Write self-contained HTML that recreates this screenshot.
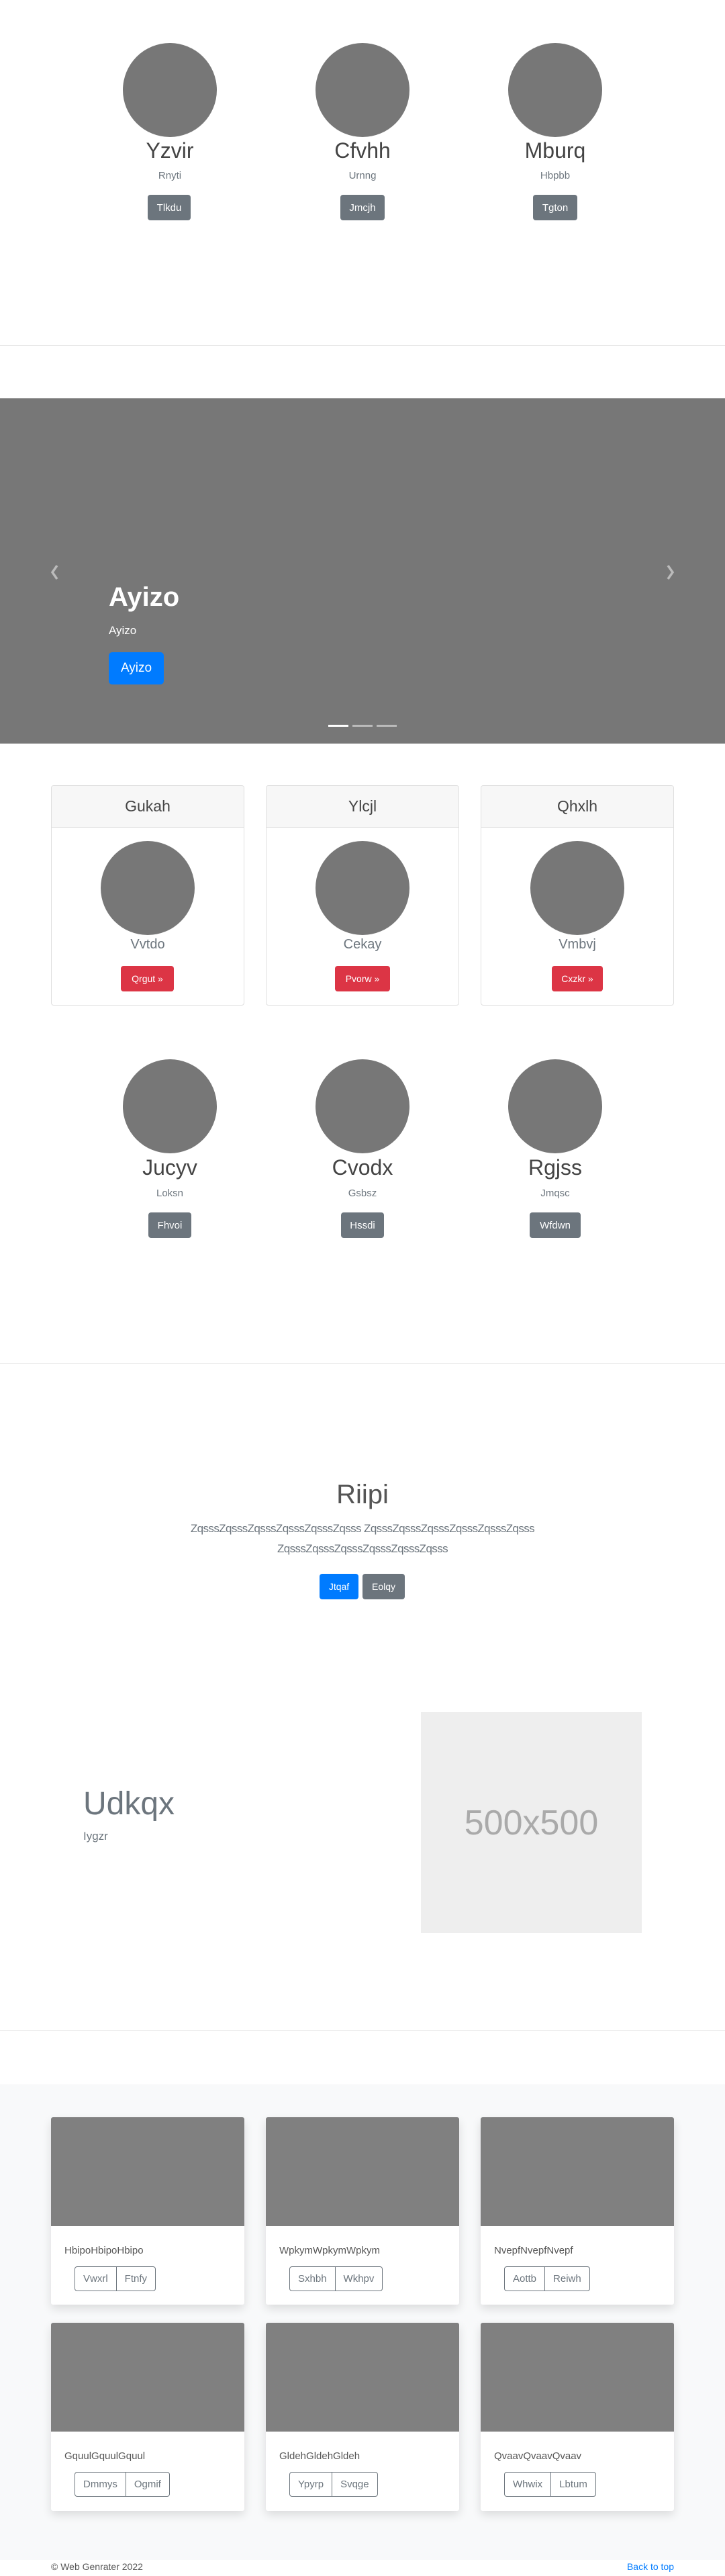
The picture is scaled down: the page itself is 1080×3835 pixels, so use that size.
<!DOCTYPE html>
<html><head><meta charset="utf-8">
<style>
*{box-sizing:border-box;margin:0;padding:0}
body{width:1080px;height:3835px;position:relative;font-family:"Liberation Sans",sans-serif;background:#fff;color:#212529;overflow:hidden}
.a{position:absolute}
.c{position:absolute;width:140px;height:140px;border-radius:50%;background:#777}
.t{position:absolute;text-align:center;white-space:nowrap}
.btn{position:absolute;display:flex;align-items:center;justify-content:center;border-radius:4px;color:#fff;font-size:15px}
.gray{background:#6c757d}
.red{background:#dc3545}
.blue{background:#007bff}
.hr{position:absolute;left:0;width:1080px;height:1px;background:#e5e5e5}
.card{position:absolute;border:1px solid rgba(0,0,0,.125);border-radius:4px;background:#fff;overflow:hidden}
.ch{height:62px;background:#f7f7f7;border-bottom:1px solid rgba(0,0,0,.125);display:flex;align-items:center;justify-content:center;font-size:23px;color:#444}
.sc{position:absolute;background:#fff;box-shadow:0 6px 14px rgba(0,0,0,.12);border-radius:3px;overflow:hidden}
.sc .im{height:162px;background:#808080}
.sc .tt{position:absolute;left:20px;top:190px;font-size:15px;color:#555}
.bg{position:absolute;left:35px;top:222px;height:37px;display:flex;border:1px solid #6c757d;border-radius:4px}
.bg span{display:flex;align-items:center;padding:0 12px;font-size:15px;color:#6c757d}
.bg span+span{border-left:1px solid #6c757d}
</style></head><body>

<div class="c" style="left:183px;top:64px"></div>
<div class="c" style="left:470px;top:64px"></div>
<div class="c" style="left:757px;top:64px"></div>
<div class="t" style="left:153px;width:200px;top:206px;font-size:32px;color:#444">Yzvir</div>
<div class="t" style="left:440px;width:200px;top:206px;font-size:32px;color:#444">Cfvhh</div>
<div class="t" style="left:727px;width:200px;top:206px;font-size:32px;color:#444">Mburq</div>
<div class="t" style="left:153px;width:200px;top:253px;font-size:15px;color:#6c757d">Rnyti</div>
<div class="t" style="left:440px;width:200px;top:253px;font-size:15px;color:#6c757d">Urnng</div>
<div class="t" style="left:727px;width:200px;top:253px;font-size:15px;color:#6c757d">Hbpbb</div>
<div class="btn gray" style="left:220px;top:290px;width:64px;height:38px">Tlkdu</div>
<div class="btn gray" style="left:507px;top:290px;width:66px;height:38px">Jmcjh</div>
<div class="btn gray" style="left:794px;top:290px;width:66px;height:38px">Tgton</div>
<div class="hr" style="top:514px"></div>

<div class="a" style="left:0;top:593px;width:1080px;height:514px;background:#777">
  <svg class="a" style="left:73px;top:247px" width="16" height="24" viewBox="0 0 16 24"><path d="M12 2 L5 12 L12 22" stroke="#bbb" stroke-width="3.5" fill="none"/></svg>
  <svg class="a" style="left:991px;top:247px" width="16" height="24" viewBox="0 0 16 24"><path d="M4 2 L11 12 L4 22" stroke="#bbb" stroke-width="3.5" fill="none"/></svg>
  <div class="a" style="left:162px;top:274px;font-size:40px;font-weight:bold;color:#fff">Ayizo</div>
  <div class="a" style="left:162px;top:336px;font-size:17px;color:#fff">Ayizo</div>
  <div class="btn blue" style="left:162px;top:378px;width:82px;height:48px;font-size:19px;border-radius:5px">Ayizo</div>
  <div class="a" style="left:489px;top:486px;width:30px;height:3px;background:#fff"></div>
  <div class="a" style="left:525px;top:486px;width:30px;height:3px;background:rgba(255,255,255,.5)"></div>
  <div class="a" style="left:561px;top:486px;width:30px;height:3px;background:rgba(255,255,255,.5)"></div>
</div>

<div class="card" style="left:76px;top:1169px;width:288px;height:328px"><div class="ch">Gukah</div></div>
<div class="card" style="left:396px;top:1169px;width:288px;height:328px"><div class="ch">Ylcjl</div></div>
<div class="card" style="left:716px;top:1169px;width:288px;height:328px"><div class="ch">Qhxlh</div></div>
<div class="c" style="left:150px;top:1252px"></div>
<div class="c" style="left:470px;top:1252px"></div>
<div class="c" style="left:790px;top:1252px"></div>
<div class="t" style="left:120px;width:200px;top:1395px;font-size:20px;color:#6c757d">Vvtdo</div>
<div class="t" style="left:440px;width:200px;top:1395px;font-size:20px;color:#6c757d">Cekay</div>
<div class="t" style="left:760px;width:200px;top:1395px;font-size:20px;color:#6c757d">Vmbvj</div>
<div class="btn red" style="left:180px;top:1438px;width:79px;height:38px;font-size:14px">Qrgut »</div>
<div class="btn red" style="left:499px;top:1438px;width:82px;height:38px;font-size:14px">Pvorw »</div>
<div class="btn red" style="left:822px;top:1438px;width:76px;height:38px;font-size:14px">Cxzkr »</div>

<div class="c" style="left:183px;top:1577px"></div>
<div class="c" style="left:470px;top:1577px"></div>
<div class="c" style="left:757px;top:1577px"></div>
<div class="t" style="left:153px;width:200px;top:1720px;font-size:32px;color:#444">Jucyv</div>
<div class="t" style="left:440px;width:200px;top:1720px;font-size:32px;color:#444">Cvodx</div>
<div class="t" style="left:727px;width:200px;top:1720px;font-size:32px;color:#444">Rgjss</div>
<div class="t" style="left:153px;width:200px;top:1768px;font-size:15px;color:#6c757d">Loksn</div>
<div class="t" style="left:440px;width:200px;top:1768px;font-size:15px;color:#6c757d">Gsbsz</div>
<div class="t" style="left:727px;width:200px;top:1768px;font-size:15px;color:#6c757d">Jmqsc</div>
<div class="btn gray" style="left:221px;top:1805px;width:64px;height:38px">Fhvoi</div>
<div class="btn gray" style="left:508px;top:1805px;width:64px;height:38px">Hssdi</div>
<div class="btn gray" style="left:789px;top:1805px;width:76px;height:38px">Wfdwn</div>
<div class="hr" style="top:2029px"></div>

<div class="t" style="left:0;width:1080px;top:2203px;font-size:40px;font-weight:300;color:#555">Riipi</div>
<div class="t" style="left:0;width:1080px;top:2261px;font-size:17px;line-height:30px;color:#6c757d;letter-spacing:-0.6px">ZqsssZqsssZqsssZqsssZqsssZqsss ZqsssZqsssZqsssZqsssZqsssZqsss<br>ZqsssZqsssZqsssZqsssZqsssZqsss</div>
<div class="btn blue" style="left:476px;top:2343px;width:58px;height:38px;font-size:14px">Jtqaf</div>
<div class="btn gray" style="left:540px;top:2343px;width:63px;height:38px;font-size:14px">Eolqy</div>

<div class="a" style="left:124px;top:2658px;font-size:48px;font-weight:300;color:#6c757d">Udkqx</div>
<div class="a" style="left:124px;top:2724px;font-size:17px;color:#6c757d">Iygzr</div>
<div class="a" style="left:627px;top:2549px;width:329px;height:329px;background:#eee;display:flex;align-items:center;justify-content:center;font-size:52px;color:#aaa">500x500</div>
<div class="hr" style="top:3022px"></div>

<div class="a" style="left:0;top:3103px;width:1080px;height:708px;background:#f8f9fa"></div>
<div class="sc" style="left:76px;top:3152px;width:288px;height:279px"><div class="im"></div><div class="tt">HbipoHbipoHbipo</div><div class="bg"><span>Vwxrl</span><span>Ftnfy</span></div></div>
<div class="sc" style="left:396px;top:3152px;width:288px;height:279px"><div class="im"></div><div class="tt">WpkymWpkymWpkym</div><div class="bg"><span>Sxhbh</span><span>Wkhpv</span></div></div>
<div class="sc" style="left:716px;top:3152px;width:288px;height:279px"><div class="im"></div><div class="tt">NvepfNvepfNvepf</div><div class="bg"><span>Aottb</span><span>Reiwh</span></div></div>
<div class="sc" style="left:76px;top:3458px;width:288px;height:280px"><div class="im"></div><div class="tt">GquulGquulGquul</div><div class="bg"><span>Dmmys</span><span>Ogmif</span></div></div>
<div class="sc" style="left:396px;top:3458px;width:288px;height:280px"><div class="im"></div><div class="tt">GldehGldehGldeh</div><div class="bg"><span>Ypyrp</span><span>Svqge</span></div></div>
<div class="sc" style="left:716px;top:3458px;width:288px;height:280px"><div class="im"></div><div class="tt">QvaavQvaavQvaav</div><div class="bg"><span>Whwix</span><span>Lbtum</span></div></div>

<div class="a" style="left:76px;top:3813px;font-size:14px;color:#555">© Web Genrater 2022</div>
<div class="a" style="right:76px;top:3813px;font-size:14px;color:#007bff">Back to top</div>
</body></html>
